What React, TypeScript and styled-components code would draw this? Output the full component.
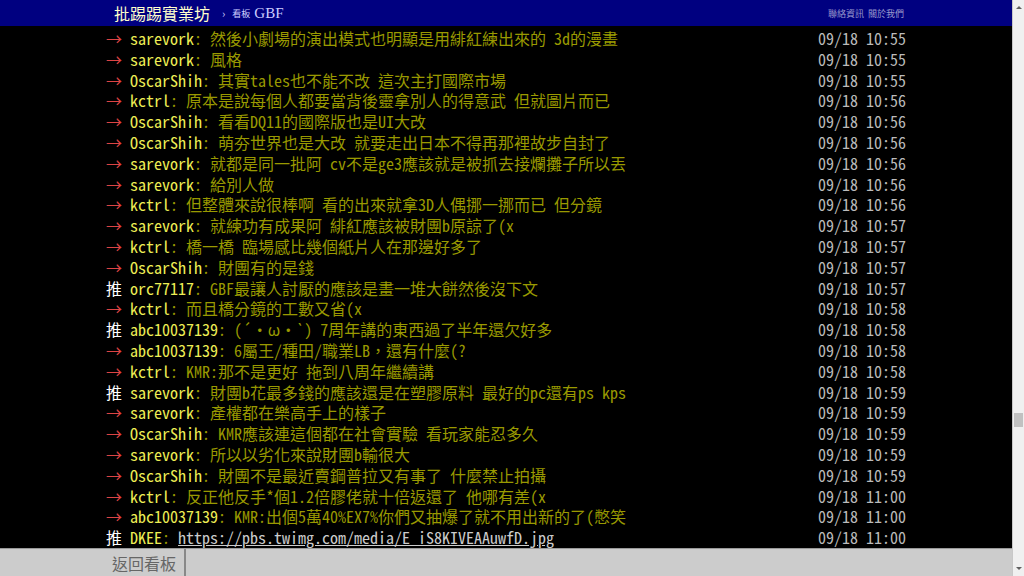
import styled, { createGlobalStyle } from 'styled-components';

type Push = {
  tag: '推' | '→';
  user: string;
  content: string;
  time: string;
  link?: boolean;
};

const PUSHES: Push[] = [
  { tag: '→', user: 'sarevork', content: '然後小劇場的演出模式也明顯是用緋紅練出來的 3d的漫畫', time: '09/18 10:55' },
  { tag: '→', user: 'sarevork', content: '風格', time: '09/18 10:55' },
  { tag: '→', user: 'OscarShih', content: '其實tales也不能不改 這次主打國際市場', time: '09/18 10:55' },
  { tag: '→', user: 'kctrl', content: '原本是說每個人都要當背後靈拿別人的得意武 但就圖片而已', time: '09/18 10:56' },
  { tag: '→', user: 'OscarShih', content: '看看DQ11的國際版也是UI大改', time: '09/18 10:56' },
  { tag: '→', user: 'OscarShih', content: '萌夯世界也是大改 就要走出日本不得再那裡故步自封了', time: '09/18 10:56' },
  { tag: '→', user: 'sarevork', content: '就都是同一批阿 cv不是ge3應該就是被抓去接爛攤子所以丟', time: '09/18 10:56' },
  { tag: '→', user: 'sarevork', content: '給別人做', time: '09/18 10:56' },
  { tag: '→', user: 'kctrl', content: '但整體來說很棒啊 看的出來就拿3D人偶挪一挪而已 但分鏡', time: '09/18 10:56' },
  { tag: '→', user: 'sarevork', content: '就練功有成果阿 緋紅應該被財團b原諒了(x', time: '09/18 10:57' },
  { tag: '→', user: 'kctrl', content: '橋一橋 臨場感比幾個紙片人在那邊好多了', time: '09/18 10:57' },
  { tag: '→', user: 'OscarShih', content: '財團有的是錢', time: '09/18 10:57' },
  { tag: '推', user: 'orc77117', content: 'GBF最讓人討厭的應該是畫一堆大餅然後沒下文', time: '09/18 10:57' },
  { tag: '→', user: 'kctrl', content: '而且橋分鏡的工數又省(x', time: '09/18 10:58' },
  { tag: '推', user: 'abc10037139', content: '(´・ω・`) 7周年講的東西過了半年還欠好多', time: '09/18 10:58' },
  { tag: '→', user: 'abc10037139', content: '6屬王/種田/職業LB，還有什麼(?', time: '09/18 10:58' },
  { tag: '→', user: 'kctrl', content: 'KMR:那不是更好 拖到八周年繼續講', time: '09/18 10:58' },
  { tag: '推', user: 'sarevork', content: '財團b花最多錢的應該還是在塑膠原料 最好的pc還有ps kps', time: '09/18 10:59' },
  { tag: '→', user: 'sarevork', content: '產權都在樂高手上的樣子', time: '09/18 10:59' },
  { tag: '→', user: 'OscarShih', content: 'KMR應該連這個都在社會實驗 看玩家能忍多久', time: '09/18 10:59' },
  { tag: '→', user: 'sarevork', content: '所以以劣化來說財團b輸很大', time: '09/18 10:59' },
  { tag: '→', user: 'OscarShih', content: '財團不是最近賣鋼普拉又有事了 什麼禁止拍攝', time: '09/18 10:59' },
  { tag: '→', user: 'kctrl', content: '反正他反手*個1.2倍膠佬就十倍返還了 他哪有差(x', time: '09/18 11:00' },
  { tag: '→', user: 'abc10037139', content: 'KMR:出個5萬40%EX7%你們又抽爆了就不用出新的了(憋笑', time: '09/18 11:00' },
  { tag: '推', user: 'DKEE', content: 'https://pbs.twimg.com/media/E_iS8KIVEAAuwfD.jpg', time: '09/18 11:00', link: true },
];

const GlobalStyle = createGlobalStyle`
  html, body {
    margin: 0;
    padding: 0;
    background: #000;
    overflow: hidden;
  }
`;

const MONO = `"Noto Sans Mono CJK TC", "Liberation Mono", "Noto Sans CJK TC", monospace`;

const Page = styled.div`
  display: flex;
  width: 100vw;
  height: 100vh;
  overflow: hidden;
`;

const Main = styled.div`
  flex: 1;
  display: flex;
  flex-direction: column;
  min-width: 0;
  background: #000;
`;

const TopBar = styled.div`
  height: 26px;
  flex-shrink: 0;
  background: #000080;
  display: flex;
  justify-content: center;
`;

const TopInner = styled.div`
  width: 800px;
  padding: 0 2px 0 8px;
  box-sizing: border-box;
  display: flex;
  align-items: center;
`;

const SiteTitle = styled.span`
  font-family: "Noto Sans CJK TC", sans-serif;
  font-size: 16px;
  color: #ffffcc;
`;

const Crumb = styled.span`
  font-family: "Noto Sans CJK TC", sans-serif;
  font-size: 11px;
  color: #ccccff;
  margin-left: 12px;
`;

const BoardLabel = styled.span`
  font-family: "Noto Sans CJK TC", sans-serif;
  font-size: 9px;
  color: #ccccff;
  margin-left: 7px;
`;

const BoardName = styled.span`
  font-family: "Liberation Serif", serif;
  font-size: 15px;
  color: #ccccff;
  margin-left: 4px;
`;

const TopLinks = styled.div`
  margin-left: auto;
  display: flex;
  gap: 4px;
`;

const TopLink = styled.span`
  font-family: "Noto Sans CJK TC", sans-serif;
  font-size: 9px;
  color: #9999cc;
`;

const Content = styled.div`
  flex: 1;
  display: flex;
  justify-content: center;
  padding-top: 2px;
`;

const Screen = styled.div`
  width: 800px;
  font-family: ${MONO};
  font-size: 16px;
  line-height: 20.8px;
`;

const Row = styled.div`
  display: flex;
  white-space: pre;
`;

const Tag = styled.span<{ $push: boolean }>`
  color: ${(p) => (p.$push ? '#ffffff' : '#dd4444')};
`;

const User = styled.span`
  color: #eeee55;
`;

const Text = styled.span`
  color: #999900;
`;

const Link = styled.span`
  color: #cccccc;
  text-decoration: underline;
`;

const Time = styled.span`
  margin-left: auto;
  color: #bbbbbb;
`;

const BottomBar = styled.div`
  height: 28px;
  flex-shrink: 0;
  background: #cccccc;
  border-top: 1px solid #999;
  display: flex;
  justify-content: center;
`;

const BottomInner = styled.div`
  width: 800px;
  display: flex;
`;

const BackButton = styled.div`
  font-family: "Noto Sans CJK TC", sans-serif;
  font-size: 16px;
  line-height: 28px;
  color: #666;
  padding: 0 8px 0 6px;
  border-right: 2px solid #888;
`;

const Scrollbar = styled.div`
  width: 11px;
  flex-shrink: 0;
  background: #f0f0f0;
  border-left: 1px solid #c8c8c8;
  display: flex;
  flex-direction: column;
  align-items: center;
`;

const ScrollArrow = styled.div<{ $down?: boolean }>`
  width: 0;
  height: 0;
  margin: 6px 0;
  border-left: 3px solid transparent;
  border-right: 3px solid transparent;
  ${(p) => (p.$down ? 'border-top: 3px solid #606060;' : 'border-bottom: 3px solid #606060;')}
`;

const Track = styled.div`
  flex: 1;
  width: 100%;
  display: flex;
  flex-direction: column;
  align-items: center;
  padding-top: 398px;
  box-sizing: border-box;
`;

const Thumb = styled.div`
  width: 9px;
  height: 14px;
  background: #c1c1c1;
`;

export default function App() {
  return (
    <Page>
      <GlobalStyle />
      <Main>
        <TopBar>
          <TopInner>
            <SiteTitle>批踢踢實業坊</SiteTitle>
            <Crumb>›</Crumb>
            <BoardLabel>看板</BoardLabel>
            <BoardName>GBF</BoardName>
            <TopLinks>
              <TopLink>聯絡資訊</TopLink>
              <TopLink>關於我們</TopLink>
            </TopLinks>
          </TopInner>
        </TopBar>
        <Content>
          <Screen>
            {PUSHES.map((p, i) => (
              <Row key={i}>
                <Tag $push={p.tag === '推'}>{p.tag === '推' ? '推 ' : '→ '}</Tag>
                <User>{p.user}</User>
                <Text>: </Text>
                {p.link ? <Link>{p.content}</Link> : <Text>{p.content}</Text>}
                <Time>{p.time}</Time>
              </Row>
            ))}
          </Screen>
        </Content>
        <BottomBar>
          <BottomInner>
            <BackButton>返回看板</BackButton>
          </BottomInner>
        </BottomBar>
      </Main>
      <Scrollbar>
        <ScrollArrow />
        <Track>
          <Thumb />
        </Track>
        <ScrollArrow $down />
      </Scrollbar>
    </Page>
  );
}
